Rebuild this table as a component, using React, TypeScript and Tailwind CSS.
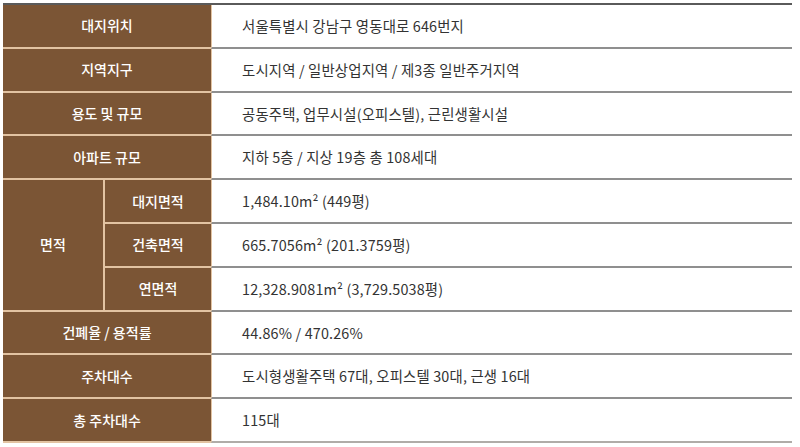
import React from 'react';

const font = { fontFamily: '"Noto Sans CJK KR", "Noto Sans", sans-serif' };

const Label = ({ children, className = '' }: { children: React.ReactNode; className?: string }) => (
  <div className={`flex items-center justify-center bg-[#7b5535] text-white text-[14px] font-medium border-b-2 border-[#e2c3a2] ${className}`}>
    {children}
  </div>
);

const Value = ({ children, className = '' }: { children: React.ReactNode; className?: string }) => (
  <div className={`flex items-center pl-[30px] bg-white text-[#333] text-[14.4px] tracking-[0.15px] border-b-2 border-[#8f8f8f] border-l border-l-[#e2c3a2] ${className}`}>
    {children}
  </div>
);

const App: React.FC = () => {
  return (
    <div className="w-[800px] h-[447px] bg-white pt-[3px] pl-[3px]" style={font}>
      <div className="w-[789px] grid grid-cols-[102px_106px_1fr] grid-rows-[repeat(10,43.8px)] border-t-2 border-[#5a5a5a]">
        <Label className="col-span-2">대지위치</Label>
        <Value className="tracking-[0.4px]">서울특별시 강남구 영동대로 646번지</Value>

        <Label className="col-span-2">지역지구</Label>
        <Value>도시지역 / 일반상업지역 / 제3종 일반주거지역</Value>

        <Label className="col-span-2">용도 및 규모</Label>
        <Value>공동주택, 업무시설(오피스텔), 근린생활시설</Value>

        <Label className="col-span-2">아파트 규모</Label>
        <Value>지하 5층 / 지상 19층 총 108세대</Value>

        <Label className="row-span-3 border-r-2 border-r-[#e2c3a2]">면적</Label>
        <Label>대지면적</Label>
        <Value>1,484.10m² (449평)</Value>
        <Label>건축면적</Label>
        <Value>665.7056m² (201.3759평)</Value>
        <Label>연면적</Label>
        <Value>12,328.9081m² (3,729.5038평)</Value>

        <Label className="col-span-2">건폐율 / 용적률</Label>
        <Value>44.86% / 470.26%</Value>

        <Label className="col-span-2">주차대수</Label>
        <Value>도시형생활주택 67대, 오피스텔 30대, 근생 16대</Value>

        <Label className="col-span-2 border-b-0">총 주차대수</Label>
        <Value className="border-b-[#b0aca8]">115대</Value>
      </div>
    </div>
  );
};

export default App;
